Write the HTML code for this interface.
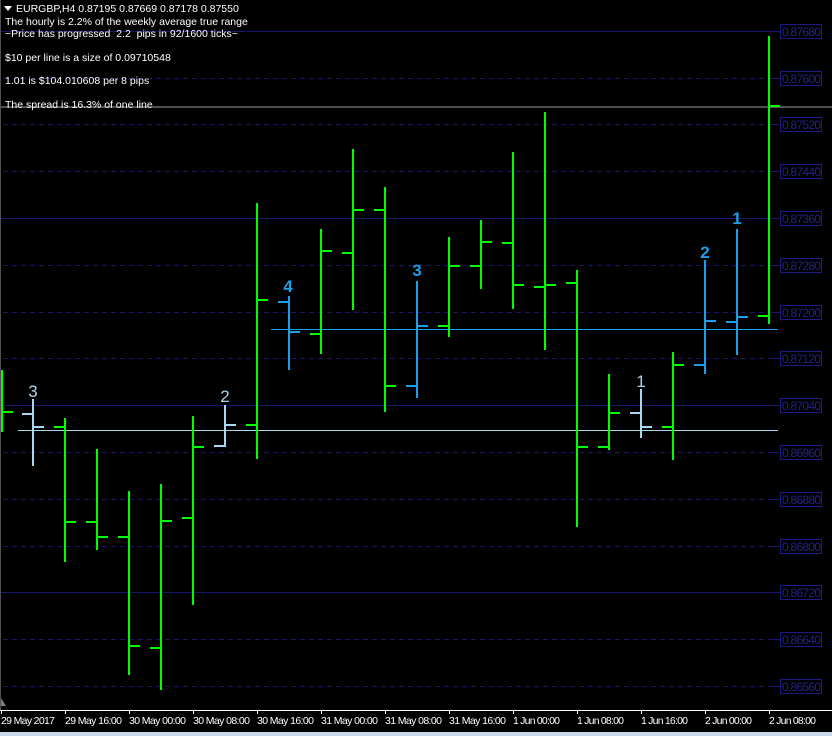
<!DOCTYPE html>
<html><head><meta charset="utf-8"><style>
html,body{margin:0;padding:0;background:#000;width:832px;height:736px;overflow:hidden}
svg{display:block}
text{font-family:"Liberation Sans",sans-serif}
</style></head><body>
<svg width="832" height="736" xmlns="http://www.w3.org/2000/svg">
<rect width="832" height="736" fill="#000"/>
<g stroke="#17176e" stroke-width="1">
<line x1="0" y1="31.5" x2="780" y2="31.5"/>
<line x1="0" y1="218.5" x2="780" y2="218.5"/>
<line x1="0" y1="405.5" x2="780" y2="405.5"/>
<line x1="0" y1="592.5" x2="780" y2="592.5"/>
</g>
<g stroke="#17176e" stroke-width="1" stroke-dasharray="5,4">
<line x1="3" y1="78.5" x2="768" y2="78.5"/>
<line x1="3" y1="124.5" x2="768" y2="124.5"/>
<line x1="3" y1="171.5" x2="768" y2="171.5"/>
<line x1="3" y1="265.5" x2="768" y2="265.5"/>
<line x1="3" y1="312.5" x2="768" y2="312.5"/>
<line x1="3" y1="358.5" x2="768" y2="358.5"/>
<line x1="3" y1="452.5" x2="768" y2="452.5"/>
<line x1="3" y1="499.5" x2="768" y2="499.5"/>
<line x1="3" y1="546.5" x2="768" y2="546.5"/>
<line x1="3" y1="639.5" x2="768" y2="639.5"/>
<line x1="3" y1="686.5" x2="768" y2="686.5"/>
</g>
<g stroke="#17176e" stroke-width="1">
<line x1="768" y1="78.5" x2="780" y2="78.5"/><line x1="768" y1="124.5" x2="780" y2="124.5"/>
<line x1="768" y1="171.5" x2="780" y2="171.5"/><line x1="768" y1="265.5" x2="780" y2="265.5"/>
<line x1="768" y1="312.5" x2="780" y2="312.5"/><line x1="768" y1="358.5" x2="780" y2="358.5"/>
<line x1="768" y1="452.5" x2="780" y2="452.5"/><line x1="768" y1="499.5" x2="780" y2="499.5"/>
<line x1="768" y1="546.5" x2="780" y2="546.5"/><line x1="768" y1="639.5" x2="780" y2="639.5"/>
<line x1="768" y1="686.5" x2="780" y2="686.5"/>
</g>
<g fill="none" stroke="#1c1c84" stroke-width="1">
<rect x="780.5" y="24.5" width="41" height="14"/><rect x="780.5" y="71.5" width="41" height="14"/>
<rect x="780.5" y="117.5" width="41" height="14"/><rect x="780.5" y="164.5" width="41" height="14"/>
<rect x="780.5" y="211.5" width="41" height="14"/><rect x="780.5" y="258.5" width="41" height="14"/>
<rect x="780.5" y="305.5" width="41" height="14"/><rect x="780.5" y="351.5" width="41" height="14"/>
<rect x="780.5" y="398.5" width="41" height="14"/><rect x="780.5" y="445.5" width="41" height="14"/>
<rect x="780.5" y="492.5" width="41" height="14"/><rect x="780.5" y="539.5" width="41" height="14"/>
<rect x="780.5" y="585.5" width="41" height="14"/><rect x="780.5" y="632.5" width="41" height="14"/>
<rect x="780.5" y="679.5" width="41" height="14"/>
</g>
<g fill="#22228a" font-size="12">
<text x="782" y="36" textLength="39">0.87680</text><text x="782" y="83" textLength="39">0.87600</text><text x="782" y="129" textLength="39">0.87520</text>
<text x="782" y="176" textLength="39">0.87440</text><text x="782" y="223" textLength="39">0.87360</text><text x="782" y="270" textLength="39">0.87280</text>
<text x="782" y="317" textLength="39">0.87200</text><text x="782" y="363" textLength="39">0.87120</text><text x="782" y="410" textLength="39">0.87040</text>
<text x="782" y="457" textLength="39">0.86960</text><text x="782" y="504" textLength="39">0.86880</text><text x="782" y="551" textLength="39">0.86800</text>
<text x="782" y="597" textLength="39">0.86720</text><text x="782" y="644" textLength="39">0.86640</text><text x="782" y="691" textLength="39">0.86560</text>
</g>
<line x1="0" y1="107" x2="832" y2="107" stroke="#a0a0a0" stroke-width="1"/>
<line x1="271" y1="329.5" x2="778" y2="329.5" stroke="#1e9ee6" stroke-width="1"/>
<line x1="18" y1="430.5" x2="778" y2="430.5" stroke="#a8d8f0" stroke-width="1"/>
<path fill="none" stroke="#00ff00" stroke-width="2" d="
M2,370V432 M2,412H13
M65,418V562 M54,427H65 M65,522H76
M97,449V550 M86,522H97 M97,537H108
M129,491V675 M118,537H129 M129,646H140
M161,484V690 M150,648H161 M161,521H172
M193,416V605 M182,518H193 M193,447H204
M257,203V459 M246,425H257 M257,300H268
M321,229V354 M310,334H321 M321,251H332
M353,149V310 M342,253H353 M353,210H364
M385,187V412 M374,210H385 M385,386H396
M449,237V337 M438,326H449 M449,266H460
M481,220V289 M470,266H481 M481,242H492
M513,152V309 M502,243H513 M513,285H524
M545,112V350 M534,287H545 M545,285H556
M577,270V527 M566,283H577 M577,447H588
M609,374V450 M598,447H609 M609,413H620
M673,352V460 M662,427H673 M673,365H684
M769,36V324 M758,316H769 M769,106H780"/>
<path fill="none" stroke="#a8d8f0" stroke-width="2" d="
M33,399V466 M22,414H33 M33,427H44
M225,405V447 M214,446H225 M225,425H236
M641,389V438 M630,413H641 M641,427H652"/>
<path fill="none" stroke="#1e9ee6" stroke-width="2" d="
M289,296V370 M278,302H289 M289,332H300
M417,281V398 M406,386H417 M417,326H428
M705,260V374 M694,365H705 M705,321H716
M737,229V355 M726,322H737 M737,317H748"/>
<g font-size="17" fill="#a8d8f0" text-anchor="middle">
<text x="33" y="397">3</text><text x="225" y="402">2</text><text x="641" y="387">1</text>
</g>
<g font-size="17" font-weight="bold" fill="#1e9ee6" text-anchor="middle">
<text x="288" y="292">4</text><text x="417" y="276">3</text><text x="705" y="258">2</text><text x="737" y="224">1</text>
</g>
<path d="M4,6 L12,6 L8,11 Z" fill="#fff"/>
<g font-size="10.5" fill="#fff">
<text x="16" y="12">EURGBP,H4  0.87195 0.87669 0.87178 0.87550</text>
<text x="5" y="25">The hourly is 2.2% of the weekly average true range</text>
<text x="5" y="37" xml:space="preserve">~Price has progressed  2.2  pips in 92/1600 ticks~</text>
<text x="5" y="61">$10 per line is a size of 0.09710548</text>
<text x="5" y="84">1.01 is $104.010608 per 8 pips</text>
<text x="5" y="108">The spread is 16.3% of one line</text>
</g>
<line x1="0.5" y1="0" x2="0.5" y2="710" stroke="#505050"/>
<path d="M1,698 L1,706 L6,706 Z" fill="#808080"/>
<line x1="0" y1="710.5" x2="832" y2="710.5" stroke="#fff"/>
<g stroke="#fff">
<line x1="1.5" y1="710" x2="1.5" y2="714"/><line x1="65.5" y1="710" x2="65.5" y2="714"/>
<line x1="129.5" y1="710" x2="129.5" y2="714"/><line x1="193.5" y1="710" x2="193.5" y2="714"/>
<line x1="257.5" y1="710" x2="257.5" y2="714"/><line x1="321.5" y1="710" x2="321.5" y2="714"/>
<line x1="385.5" y1="710" x2="385.5" y2="714"/><line x1="449.5" y1="710" x2="449.5" y2="714"/>
<line x1="513.5" y1="710" x2="513.5" y2="714"/><line x1="577.5" y1="710" x2="577.5" y2="714"/>
<line x1="641.5" y1="710" x2="641.5" y2="714"/><line x1="705.5" y1="710" x2="705.5" y2="714"/>
<line x1="769.5" y1="710" x2="769.5" y2="714"/>
</g>
<g font-size="10.5" fill="#fff">
<text x="1" y="724" textLength="54">29 May 2017</text><text x="65" y="724" textLength="57">29 May 16:00</text>
<text x="129" y="724" textLength="57">30 May 00:00</text><text x="193" y="724" textLength="57">30 May 08:00</text>
<text x="257" y="724" textLength="57">30 May 16:00</text><text x="321" y="724" textLength="57">31 May 00:00</text>
<text x="385" y="724" textLength="57">31 May 08:00</text><text x="449" y="724" textLength="57">31 May 16:00</text>
<text x="513" y="724" textLength="47">1 Jun 00:00</text><text x="577" y="724" textLength="47">1 Jun 08:00</text>
<text x="641" y="724" textLength="47">1 Jun 16:00</text><text x="705" y="724" textLength="47">2 Jun 00:00</text>
<text x="769" y="724" textLength="47">2 Jun 08:00</text>
</g>
<rect x="0" y="732" width="832" height="4" fill="#c8d8ec"/>
</svg>
</body></html>
